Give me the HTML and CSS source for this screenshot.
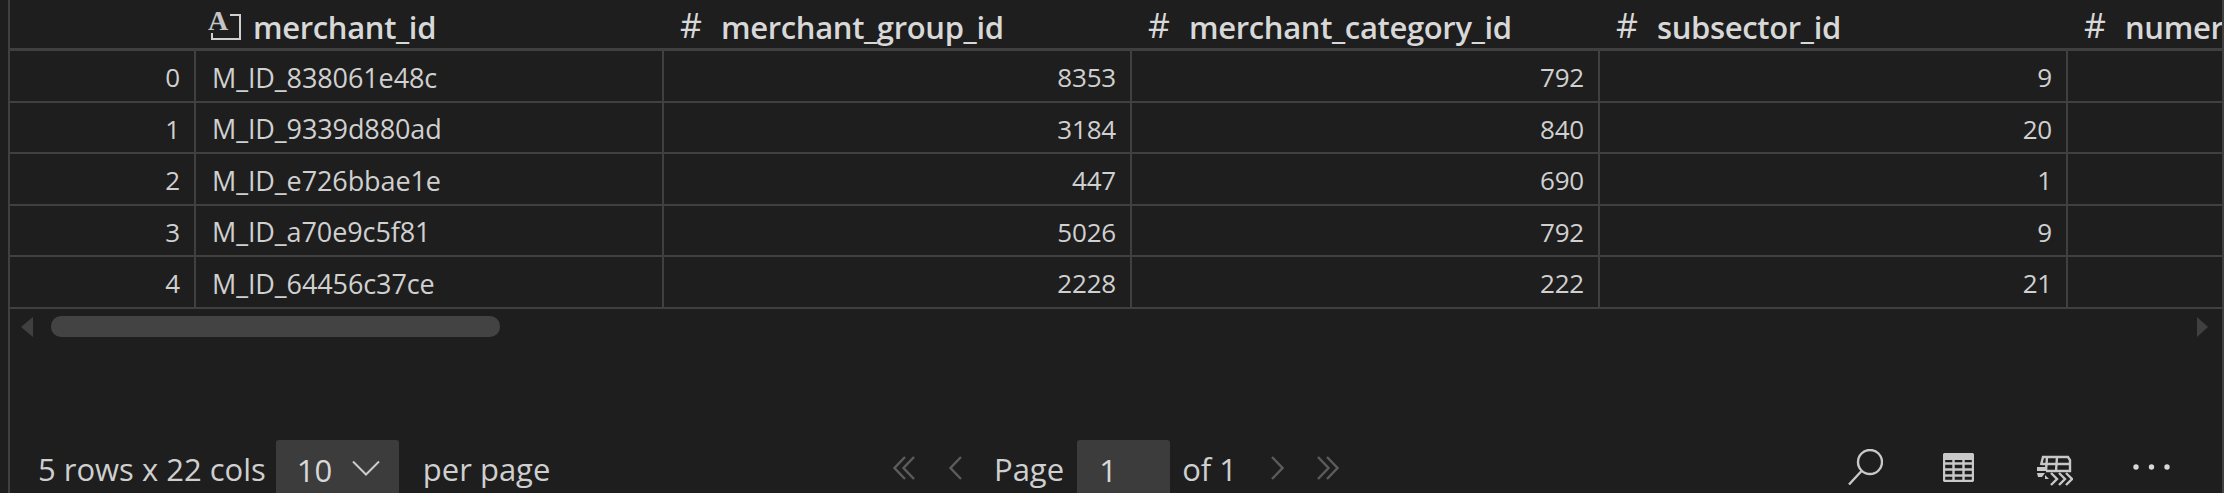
FILE: index.html
```html
<!DOCTYPE html>
<html lang="en">
<head>
<meta charset="utf-8">
<title>Data viewer</title>
<link rel="stylesheet" href="styles.css">
</head>
<body>
<div class="frame">
  <div class="table">
    <div class="hd"></div>
    <div class="hd"><svg class="ic-str" viewBox="0 0 33 30"><text x="0" y="19" class="ic-a">A</text><path d="M22 4H32V28H4V22" /></svg><span>merchant_id</span></div>
    <div class="hd"><span class="hash">#</span><span>merchant_group_id</span></div>
    <div class="hd"><span class="hash">#</span><span>merchant_category_id</span></div>
    <div class="hd"><span class="hash">#</span><span>subsector_id</span></div>
    <div class="hd"><span class="hash">#</span><span>numerical_1</span></div>

    <div class="c n">0</div><div class="c t">M_ID_838061e48c</div><div class="c n">8353</div><div class="c n">792</div><div class="c n">9</div><div class="c n"></div>
    <div class="c n">1</div><div class="c t">M_ID_9339d880ad</div><div class="c n">3184</div><div class="c n">840</div><div class="c n">20</div><div class="c n"></div>
    <div class="c n">2</div><div class="c t">M_ID_e726bbae1e</div><div class="c n">447</div><div class="c n">690</div><div class="c n">1</div><div class="c n"></div>
    <div class="c n">3</div><div class="c t">M_ID_a70e9c5f81</div><div class="c n">5026</div><div class="c n">792</div><div class="c n">9</div><div class="c n"></div>
    <div class="c n">4</div><div class="c t">M_ID_64456c37ce</div><div class="c n">2228</div><div class="c n">222</div><div class="c n">21</div><div class="c n"></div>
  </div>

  <div class="hscroll">
    <span class="arrow-l"></span>
    <div class="track"><div class="thumb"></div></div>
    <span class="arrow-r"></span>
  </div>

  <div class="footer">
    <div class="f-left">
      <span class="count">5 rows x 22 cols</span>
      <div class="box size"><span>10</span><svg class="chev-d" viewBox="0 0 28 16"><path d="M1 1.500L14 14.500L27 1.500"/></svg></div>
      <span class="perpage">per page</span>
    </div>
    <div class="f-mid">
      <svg class="pg dbl" viewBox="0 0 22 24"><path d="M12 1L1.500 12L12 23M21 1L10.500 12L21 23"/></svg>
      <svg class="pg sgl prev" viewBox="0 0 13 24"><path d="M12 1L1.500 12L12 23"/></svg>
      <span class="page-w">Page</span>
      <div class="box pagebox"><span>1</span></div>
      <span class="of">of 1</span>
      <svg class="pg sgl next" viewBox="0 0 13 24"><path d="M1 1L11.500 12L1 23"/></svg>
      <svg class="pg dbl" viewBox="0 0 22 24"><path d="M1 1L11.500 12L1 23M10 1L20.500 12L10 23"/></svg>
    </div>
    <div class="f-right">
      <svg class="tool search" viewBox="0 0 35 36"><circle cx="22" cy="13" r="12"/><path d="M13.500 22L1 35.500"/></svg>
      <svg class="tool grid-ic" viewBox="0 0 31 29"><rect x="1" y="1" width="29" height="27" rx="1.500"/><path class="thick" d="M1 4H30"/><path d="M1 10.500H30M1 16.500H30M1 22.500H30M10.500 3V28M20.500 3V28"/></svg>
      <svg class="tool export" viewBox="0 0 36 31"><path d="M4 10L6 2H31L33 5V16H9M9 16L10 2M20 2L19 16M4.500 9H33"/><path class="solid" d="M0 12H8V16H0ZM0 18H8L5 22H1ZM8 20L12 24H8Z"/><path d="M14 18L20 24L14 30M22 18L28 24L22 30M29 18L35 24L29 30"/></svg>
      <svg class="tool dots" viewBox="0 0 37 6"><circle cx="3" cy="3" r="2.700"/><circle cx="18.500" cy="3" r="2.700"/><circle cx="34" cy="3" r="2.700"/></svg>
    </div>
  </div>
</div>
</body>
</html>
```
FILE: styles.css
```css
* { box-sizing: border-box; }
html, body { margin: 0; height: 493px; overflow: hidden; background: #1e1e1e; }
body { font-family: "Open Sans", "Noto Sans", sans-serif; color: #d0d0d0; }
.frame { margin-left: 8px; width: 2216px; height: 493px; border-left: 2px solid #404040; border-right: 2px solid #404040; display: flex; flex-direction: column; overflow: hidden; }

.table { display: grid; grid-template-columns: 186px 468px 468px 468px 468px 154px; grid-template-rows: 51px repeat(5, 51.500px); flex: none; }
.hd { display: flex; align-items: center; border-bottom: 3px solid #404040; font-size: 31px; font-weight: 600; letter-spacing: -0.35px; color: #d8d8d8; padding: 5px 0 0 16px; overflow: hidden; white-space: nowrap; }
.hd:first-child { padding: 0; }
.hash { width: 41px; flex: none; font-weight: 400; font-size: 34px; line-height: 40px; margin-top: -3px; }
.ic-str { width: 33px; height: 30px; margin: -2px 12px 0 -4px; flex: none; overflow: visible; }
.ic-str path { fill: none; stroke: #d0d0d0; stroke-width: 2; }
.ic-a { font-family: "Liberation Serif", serif; font-size: 28px; fill: #c4c4c4; }

.c { display: flex; align-items: center; border-bottom: 2px solid #404040; border-right: 2px solid #404040; font-size: 27px; letter-spacing: -0.1px; padding: 3px 14px 0 16px; white-space: nowrap; }
.n { justify-content: flex-end; font-size: 26px; letter-spacing: -0.2px; }
.c:nth-child(6n) { border-right: none; }

.hscroll { display: flex; align-items: center; height: 21px; margin-top: 7.500px; padding-left: 11px; padding-right: 14px; flex: none; }
.arrow-l { width: 0; height: 0; border-top: 10px solid transparent; border-bottom: 10px solid transparent; border-right: 12px solid #404040; flex: none; }
.arrow-r { width: 0; height: 0; border-top: 10px solid transparent; border-bottom: 10px solid transparent; border-left: 11px solid #404040; flex: none; }
.track { flex: 1; height: 21px; padding-left: 18px; }
.thumb { width: 449px; height: 21px; border-radius: 10px; background: #434343; }

.footer { display: grid; grid-template-columns: 1fr auto 1fr; align-items: start; margin-top: 103px; flex: none; font-size: 31px; color: #cfcfcf; }
.f-left, .f-mid, .f-right { display: flex; align-items: flex-start; height: 60px; }
.f-left { padding-left: 28px; }
.count, .page-w, .of, .perpage { line-height: 58px; white-space: nowrap; }
.box { background: #3c3c3c; border-radius: 3px 3px 0 0; height: 60px; display: flex; align-items: center; line-height: 58px; color: #d8d8d8; flex: none; }
.size { width: 123px; margin-left: 10px; padding-left: 21px; }
.size span { width: 55px; }
.chev-d { width: 28px; height: 16px; margin-bottom: 4px; }
.chev-d path { fill: none; stroke: #cccccc; stroke-width: 2; }
.perpage { margin-left: 24px; }
.pg { margin-top: 16px; height: 24px; flex: none; }
.pg path { fill: none; stroke: #5c5c5c; stroke-width: 2.400; }
.dbl { width: 22px; }
.sgl { width: 13px; }
.prev { margin-left: 34px; margin-right: 32px; }
.next { margin-left: 34px; margin-right: 33px; }
.pagebox { width: 93px; margin-left: 13px; margin-right: 12px; padding-left: 22px; }

.f-right { justify-content: flex-end; padding-right: 52px; gap: 60px; align-items: flex-start; }
.tool { flex: none; }
.tool path, .tool rect, .tool circle { fill: none; stroke: #c8c8c8; stroke-width: 2.400; }
.search { width: 35px; height: 36px; margin-top: 9px; }
.grid-ic { width: 31px; height: 29px; margin-top: 13px; }
.tool .thick { stroke-width: 6; }
.export { width: 36px; height: 31px; margin-top: 15px; margin-left: 3px; }
.tool .solid { fill: #c8c8c8; stroke: none; }
.dots { width: 37px; height: 6px; margin-top: 24px; }
.tool.dots circle { fill: #d8d8d8; stroke: none; }
```
